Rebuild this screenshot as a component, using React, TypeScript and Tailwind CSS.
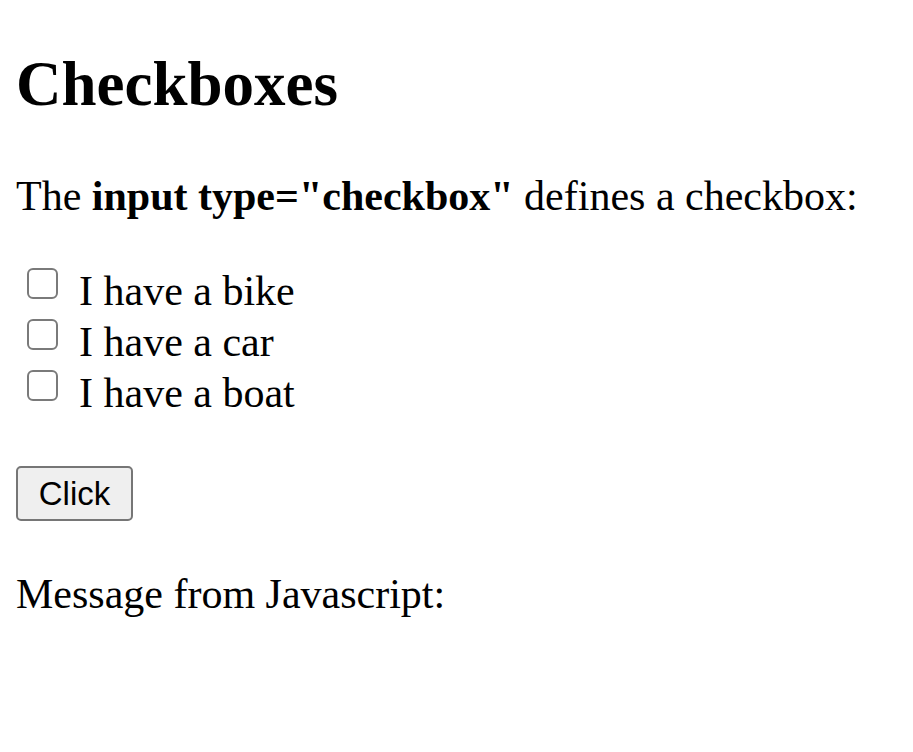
import React from 'react';

const Checkbox = () => (
  <span className="mt-[2px] ml-[11px] mr-[21px] block h-[31px] w-[31px] shrink-0 rounded-[6px] border-[2.5px] border-[#7a7a7a] bg-white" />
);

const items = ['I have a bike', 'I have a car', 'I have a boat'];

const App = () => {
  return (
    <div className="min-h-screen bg-white px-[16px] text-black [font-family:'Liberation_Serif',serif]">
      {/* Heading */}
      <h1 className="pt-[48px] text-[63px] font-bold leading-[72px]">Checkboxes</h1>

      <p className="mt-[50px] text-[42px] leading-[52px]">
        The <b>input type="checkbox"</b> defines a checkbox:
      </p>

      {/* Checkbox list */}
      <div className="mt-[44px] flex flex-col">
        {items.map(label => (
          <label key={label} className="flex items-start text-[42px] leading-[51px]">
            <Checkbox />
            <span>{label}</span>
          </label>
        ))}
      </div>

      <button className="mt-[47px] flex h-[55px] w-[117px] items-center justify-center rounded-[5px] border-2 border-[#767676] bg-[#efefef] text-[33px] leading-none text-black [font-family:'Liberation_Sans',Arial,sans-serif]">
        Click
      </button>

      <p className="mt-[47px] text-[42px] leading-[52px]">Message from Javascript:</p>
    </div>
  );
};

export default App;
